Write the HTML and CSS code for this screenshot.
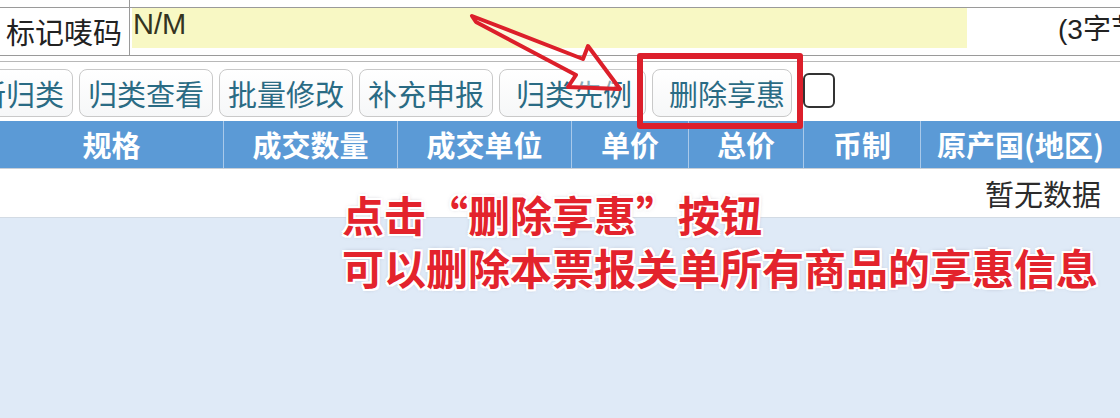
FILE: index.html
```html
<!DOCTYPE html>
<html lang="zh-CN">
<head>
<meta charset="utf-8">
<title>删除享惠</title>
<link rel="stylesheet" href="styles.css">
</head>
<body>
<div class="page">
  <div class="top-strip"><div class="top-strip-cell"></div></div>
  <div class="field-row">
    <div class="field-label">标记唛码</div>
    <div class="field-input">N/M</div>
    <div class="field-hint">(3字节)</div>
  </div>
  <div class="spacer-row"></div>
  <div class="toolbar">
    <button class="btn">新归类</button>
    <button class="btn">归类查看</button>
    <button class="btn">批量修改</button>
    <button class="btn">补充申报</button>
    <button class="btn btn-wide">归类先例</button>
    <button class="btn btn-delete">删除享惠</button>
    <span class="checkbox"></span>
  </div>
  <div class="grid-head">
    <div class="th">规格</div>
    <div class="th">成交数量</div>
    <div class="th">成交单位</div>
    <div class="th">单价</div>
    <div class="th">总价</div>
    <div class="th">币制</div>
    <div class="th">原产国(地区)</div>
  </div>
  <div class="grid-empty">暂无数据</div>
  <div class="grid-body"></div>

  <div class="highlight-box"></div>
  <svg class="arrow" viewBox="0 0 180 110" width="180" height="110">
    <polygon points="12,16 123,59 128,46 160,89 108,87 116,75 16,22" />
  </svg>
  <div class="annotation">
    <div class="annotation-line">点击“删除享惠”按钮</div>
    <div class="annotation-line">可以删除本票报关单所有商品的享惠信息</div>
  </div>
</div>
</body>
</html>
```
FILE: styles.css
```css
html, body {
  margin: 0;
  padding: 0;
}
body {
  width: 1120px;
  height: 418px;
  overflow: hidden;
  background: #dfeaf7;
  font-family: "Noto Sans CJK SC", "Liberation Sans", sans-serif;
}
.page {
  position: relative;
  width: 1120px;
  height: 418px;
  overflow: hidden;
}
.top-strip {
  height: 7px;
  background: #fff;
  border-bottom: 1px solid #9a9a9a;
  display: flex;
}
.top-strip-cell {
  width: 129px;
  border-right: 1px solid #9a9a9a;
}
.field-row {
  height: 47px;
  background: #fff;
  border-bottom: 1px solid #9a9a9a;
  display: flex;
  align-items: flex-start;
  white-space: nowrap;
  overflow: hidden;
}
.field-label {
  flex: 0 0 auto;
  width: 123px;
  height: 47px;
  padding-left: 6px;
  border-right: 1px solid #9a9a9a;
  font-size: 29px;
  line-height: 47px;
  color: #222;
}
.field-input {
  flex: 0 0 834px;
  height: 40px;
  margin-left: 2px;
  padding-left: 1px;
  background: #f8f8c4;
  font-family: "Liberation Sans", sans-serif;
  font-size: 29px;
  line-height: 32px;
  color: #34341f;
}
.field-hint {
  flex: 0 0 auto;
  padding-left: 91px;
  font-family: "Liberation Sans", "Noto Sans CJK SC", sans-serif;
  font-size: 28px;
  line-height: 44px;
  color: #222;
}
.spacer-row {
  height: 5px;
  background: #fff;
  border-bottom: 1px solid #b8b8b8;
}
.toolbar {
  background: #fff;
  height: 57px;
  padding-top: 7px;
  box-sizing: border-box;
  display: flex;
  align-items: flex-start;
  gap: 6px;
  margin-left: -32px;
}
.btn {
  flex: 0 0 auto;
  height: 48px;
  padding: 0 8px;
  border: 1px solid #c9c9c9;
  border-radius: 8px;
  background: linear-gradient(#ffffff, #f6f7f8);
  font-family: "Noto Sans CJK SC", sans-serif;
  font-size: 29px;
  line-height: 46px;
  color: #2a6b84;
  white-space: nowrap;
}
.btn-wide {
  padding: 0 13px 0 16px;
}
.btn-delete {
  padding: 0 6px 0 16px;
  margin-right: 5px;
}
.checkbox {
  flex: 0 0 auto;
  width: 28px;
  height: 31px;
  margin-top: 4px;
  border: 2px solid #333;
  border-radius: 6px;
  background: #fff;
}
.grid-head {
  height: 49px;
  display: grid;
  grid-template-columns: 224px 174px 174px 117px 115px 117px 1fr;
  background: #5b9ad6;
  border-top: 2px solid #fff;
  box-sizing: border-box;
}
.th {
  border-right: 1px solid #a9c9ea;
  color: #fff;
  font-weight: 700;
  font-size: 29px;
  line-height: 47px;
  text-align: center;
  white-space: nowrap;
}
.th:last-child {
  border-right: none;
}
.grid-empty {
  height: 50px;
  background: #fff;
  border-top: 1px solid #c8cfd8;
  border-bottom: 1px solid #d3dbe4;
  box-sizing: border-box;
  text-align: right;
  padding-right: 19px;
  font-size: 29px;
  line-height: 48px;
  color: #2b2b2b;
}
.grid-body {
  height: 200px;
  background: #dfeaf7;
}
.highlight-box {
  position: absolute;
  left: 637px;
  top: 53px;
  width: 154px;
  height: 64px;
  border: 6px solid #dc1f2b;
  border-radius: 3px;
}
.arrow {
  position: absolute;
  left: 460px;
  top: 0;
}
.arrow polygon {
  fill: rgba(255, 255, 255, 0.45);
  stroke: #dc1f2a;
  stroke-width: 4;
  stroke-linejoin: round;
}
.annotation {
  position: absolute;
  left: 342px;
  top: 187px;
  font-family: "Noto Sans CJK SC", sans-serif;
  font-weight: 700;
  font-size: 42px;
  color: #e3232c;
  white-space: nowrap;
  text-shadow:
    2px 0 0 #fff, -2px 0 0 #fff, 0 2px 0 #fff, 0 -2px 0 #fff,
    2px 2px 0 #fff, -2px -2px 0 #fff, 2px -2px 0 #fff, -2px 2px 0 #fff,
    0 0 4px rgba(90, 90, 110, 0.6);
}
.annotation-line {
  height: 53px;
  line-height: 53px;
}
```
